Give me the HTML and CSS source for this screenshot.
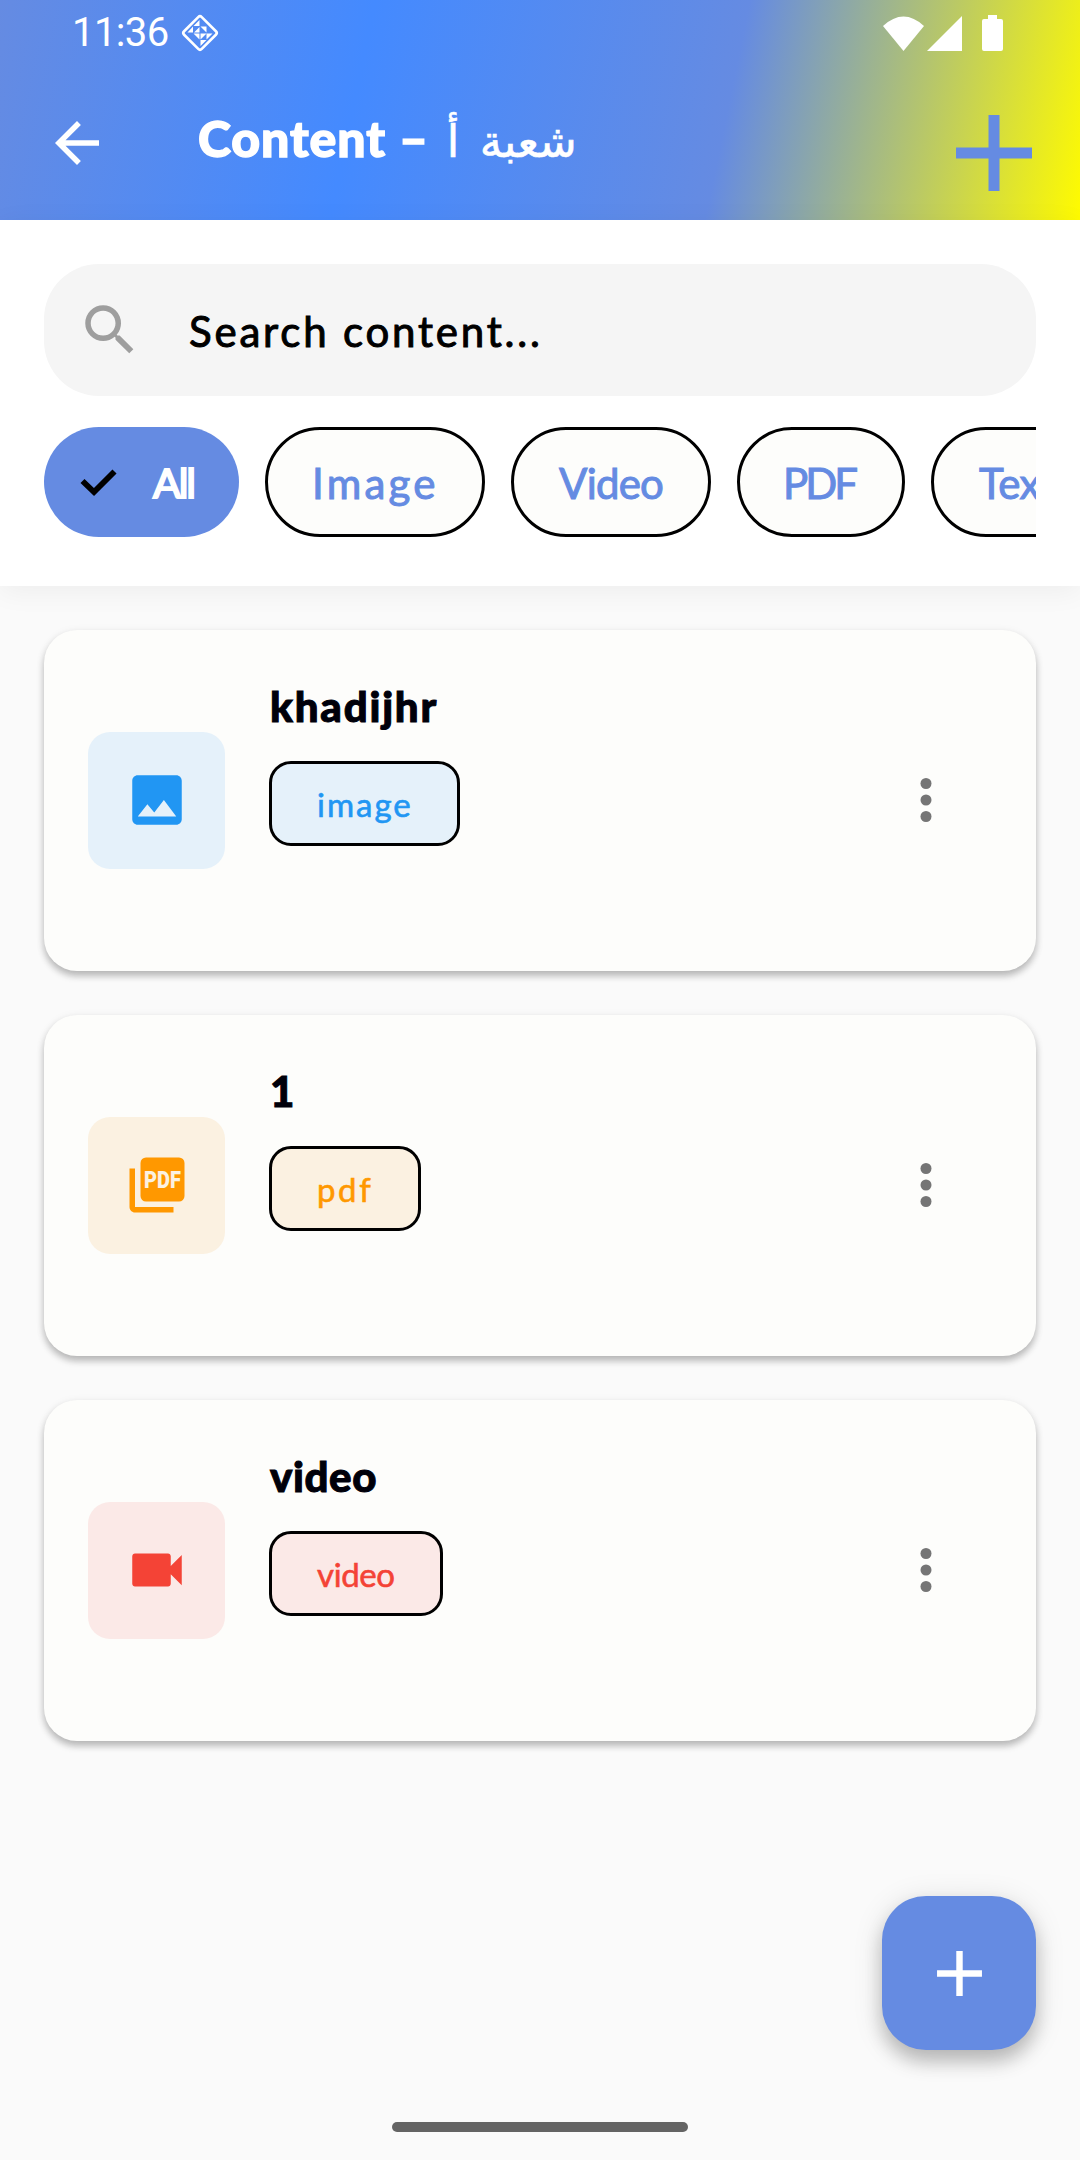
FILE: index.html
```html
<!DOCTYPE html>
<html lang="en">
<head>
<meta charset="utf-8">
<title>Content</title>
<link rel="stylesheet" href="styles.css">
</head>
<body>
<div class="screen">
  <header class="header">
    <div class="status">
      <span class="clock">11:36</span>
      <svg class="notice" viewBox="0 0 40 40">
        <rect x="7.500" y="7.500" width="25" height="25" rx="2.500" transform="rotate(45 20 20)" fill="none" stroke="#fff" stroke-width="2.600"/>
        <path d="M19.500 7v6h-6zM20.500 13.500h6v6zM13 13.500v6H7.500zM19.500 14v5.500h-5.500zM20.500 20.500h12l-6 6v-6l-6 6zM13.500 20.500h6v6zM20.500 27h6l-6 6z" fill="#fff"/>
      </svg>
      <span class="grow"></span>
      <svg class="wifi" viewBox="0 0 41 35"><path d="M0 10Q20.500 -9 41 10L20.500 35z" fill="#fff"/></svg>
      <svg class="signal" viewBox="0 0 35 35"><path d="M35 0v35H0z" fill="#fff"/></svg>
      <svg class="battery" viewBox="0 0 21 36"><path d="M6 0h9v4h4q2 0 2 2v28q0 2-2 2H2q-2 0-2-2V6q0-2 2-2h4z" fill="#fff"/></svg>
    </div>
    <div class="appbar">
      <svg class="icon back" viewBox="0 0 24 24"><path d="M20 11H7.830l5.590-5.590L12 4l-8 8 8 8 1.410-1.410L7.830 13H20z" fill="#fff"/></svg>
      <h1 class="title"><span>Content</span><span class="dash">–</span><span class="arabic" lang="ar">شعبة أ</span></h1>
      <svg class="add" viewBox="0 0 76 76"><path d="M32.500 0h11v32.500H76v11H43.500V76h-11V43.500H0v-11h32.500z" fill="#658be2"/></svg>
    </div>
  </header>

  <section class="filters">
    <div class="search">
      <svg class="icon" viewBox="0 0 24 24"><path d="M15.500 14h-.790l-.280-.270A6.471 6.471 0 0 0 16 9.500 6.500 6.500 0 1 0 9.500 16c1.610 0 3.090-.590 4.230-1.570l.270.280v.790l5 4.990L20.490 19l-4.990-5zm-6 0C7.010 14 5 11.990 5 9.500S7.010 5 9.500 5 14 7.010 14 9.500 11.990 14 9.500 14z" fill="#9e9e9e"/></svg>
      <span class="hint">Search content...</span>
    </div>
    <div class="chips">
      <div class="chip chip-on">
        <svg class="check" viewBox="0 0 49 49"><path d="M8.500 23l11.500 11 20.500-20.500" fill="none" stroke="#000" stroke-width="5.800"/></svg>
        <span>All</span>
      </div>
      <div class="chip chip-image"><span>Image</span></div>
      <div class="chip chip-video"><span>Video</span></div>
      <div class="chip chip-pdf"><span>PDF</span></div>
      <div class="chip chip-text"><span>Text</span></div>
    </div>
  </section>

  <main class="list">
    <article class="card image">
      <div class="tile">
        <svg class="icon" viewBox="0 0 24 24"><path d="M21 19V5c0-1.100-.900-2-2-2H5c-1.100 0-2 .900-2 2v14c0 1.100.900 2 2 2h14c1.100 0 2-.900 2-2zM8.500 13.500l2.500 3.010L14.500 12l4.500 6H5l3.500-4.500z" fill="currentColor"/></svg>
      </div>
      <div class="info">
        <h2 class="name">khadijhr</h2>
        <span class="badge">image</span>
      </div>
      <svg class="icon more" viewBox="0 0 24 24"><circle cx="12" cy="6" r="2"/><circle cx="12" cy="12" r="2"/><circle cx="12" cy="18" r="2"/></svg>
    </article>
    <article class="card pdf">
      <div class="tile">
        <svg class="icon" viewBox="0 0 24 24">
          <rect x="6" y="2" width="16" height="16" rx="2" fill="currentColor"/>
          <path d="M4 6H2v14c0 1.100.900 2 2 2h14v-2H4z" fill="currentColor"/>
          <text class="pdf-mark" x="7.300" y="13" textLength="13.400" lengthAdjust="spacingAndGlyphs">PDF</text>
        </svg>
      </div>
      <div class="info">
        <h2 class="name">1</h2>
        <span class="badge">pdf</span>
      </div>
      <svg class="icon more" viewBox="0 0 24 24"><circle cx="12" cy="6" r="2"/><circle cx="12" cy="12" r="2"/><circle cx="12" cy="18" r="2"/></svg>
    </article>
    <article class="card video">
      <div class="tile">
        <svg class="icon" viewBox="0 0 24 24"><path d="M17 10.500V7c0-.550-.450-1-1-1H4c-.550 0-1 .450-1 1v10c0 .550.450 1 1 1h12c.550 0 1-.450 1-1v-3.500l4 4v-11l-4 4z" fill="currentColor"/></svg>
      </div>
      <div class="info">
        <h2 class="name">video</h2>
        <span class="badge">video</span>
      </div>
      <svg class="icon more" viewBox="0 0 24 24"><circle cx="12" cy="6" r="2"/><circle cx="12" cy="12" r="2"/><circle cx="12" cy="18" r="2"/></svg>
    </article>
  </main>

  <button class="fab" aria-label="Add"><svg viewBox="0 0 24 24"><path d="M19 13h-6v6h-2v-6H5v-2h6V5h2v6h6z" fill="#fff"/></svg></button>
  <div class="home"></div>
</div>
</body>
</html>
```
FILE: styles.css
```css
* { box-sizing: border-box; }

body {
  margin: 0;
  font-family: Lato, "DejaVu Sans", sans-serif;
  color: #000;
}

svg { display: block; flex: none; }

.screen {
  position: relative;
  display: flex;
  flex-direction: column;
  width: 1080px;
  height: 2160px;
  overflow: hidden;
  background: #fafafa;
}

.icon { width: 66px; height: 66px; }
.grow { flex: 1; }

/* Header */
.header {
  flex: none;
  height: 220px;
  background: linear-gradient(101.51deg, #658be2 0%, #448aff 33.33%, #658be2 66.67%, #fffb00 100%);
}

.status {
  display: flex;
  align-items: center;
  height: 66px;
  padding: 0 77px 0 72px;
}

.clock {
  width: 108px;
  font: 400 40px/66px Roboto, sans-serif;
  letter-spacing: -0.6px;
  color: #fff;
}

.notice { width: 40px; height: 40px; }
.wifi { width: 41px; height: 35px; margin-right: 3px; }
.signal { width: 35px; height: 35px; margin-right: 20px; }
.battery { width: 21px; height: 36px; }

.appbar {
  display: flex;
  align-items: center;
  height: 154px;
  padding: 0 48px 0 44px;
}

.title {
  display: flex;
  flex: 1;
  align-items: baseline;
  margin: -8px 0 0 88px;
  font-size: 50px;
  font-weight: 900;
  line-height: 64px;
  letter-spacing: 0.9px;
  white-space: nowrap;
  color: #fff;
  -webkit-text-stroke: 1.4px;
}

.dash { margin-left: 13px; }

.arabic {
  margin-left: 18px;
  font-size: 45px;
  font-weight: 500;
  word-spacing: 9px;
  letter-spacing: 0;
  -webkit-text-stroke: 0.6px;
}

.add { width: 76px; height: 76px; margin-top: 19px; }

/* Search and filter chips */
.filters {
  position: relative;
  flex: none;
  height: 366px;
  padding: 44px 44px 0;
  background: #fff;
  box-shadow: 0 5px 27px rgba(0, 0, 0, 0.055);
}

.search {
  display: flex;
  align-items: center;
  height: 132px;
  padding-left: 33px;
  border-radius: 55px;
  background: #f5f5f5;
}

.hint {
  margin: 2px 0 0 46px;
  font-size: 42px;
  letter-spacing: 2.8px;
  -webkit-text-stroke: 1px;
}

.chips {
  display: flex;
  gap: 26px;
  margin-top: 31px;
  overflow: hidden;
}

.chip {
  display: flex;
  flex: none;
  align-items: center;
  height: 110px;
  padding: 1px 0 0 43px;
  border: 3px solid #000;
  border-radius: 55px;
  background: #fdfdfb;
  font-size: 42px;
  color: #658be2;
  -webkit-text-stroke: 1px;
}

.chip-on {
  width: 195px;
  padding-left: 30px;
  border: 0;
  background: #658be2;
  color: #fff;
  font-size: 41px;
  letter-spacing: -2px;
  -webkit-text-stroke: 2px;
}

.check { width: 49px; height: 49px; margin-right: 30px; }
.chip-image { width: 220px; padding-left: 44px; letter-spacing: 3.2px; }
.chip-video { width: 200px; padding-left: 45px; letter-spacing: -0.8px; }
.chip-pdf { width: 168px; letter-spacing: -3px; }
.chip-text { width: 180px; padding-left: 45px; letter-spacing: -0.5px; }

/* Content cards */
.list {
  display: flex;
  flex-direction: column;
  gap: 44px;
  padding: 44px;
}

.card {
  display: flex;
  align-items: center;
  height: 341px;
  padding: 44px 77px 44px 44px;
  border-radius: 33px;
  background: #fdfdfb;
  box-shadow: 0 5px 7px rgba(0, 0, 0, 0.23), 0 2px 10px rgba(0, 0, 0, 0.08);
}

.tile {
  display: flex;
  flex: none;
  align-items: center;
  justify-content: center;
  width: 137px;
  height: 137px;
  padding-bottom: 1px;
  border-radius: 22px;
}

.info {
  display: flex;
  flex: 1;
  flex-direction: column;
  align-items: flex-start;
  align-self: flex-start;
  margin-left: 44px;
}

.name {
  margin: 1px 0 0 1px;
  font-size: 42px;
  font-weight: 900;
  line-height: 62px;
  color: #00000a;
  -webkit-text-stroke: 1px;
}

.badge {
  height: 85px;
  margin-top: 24px;
  padding: 1px 43px 0 45px;
  border: 3px solid #000;
  border-radius: 22px;
  font-size: 33px;
  line-height: 79px;
  -webkit-text-stroke: 0.6px;
}

.image .tile, .image .badge { color: #2196f3; background: #e5f1fa; }
.pdf .tile, .pdf .badge { color: #ff9800; background: #fbf1e1; }
.video .tile, .video .badge { color: #f44336; background: #fbe9e7; }

.image .name { letter-spacing: 1.8px; }
.video .name { letter-spacing: 0.6px; }
.image .badge { width: 191px; letter-spacing: 2px; }
.pdf .badge { width: 152px; letter-spacing: 2.6px; }
.video .badge { width: 174px; letter-spacing: -0.4px; }

.pdf-mark {
  font: 900 8.4px Roboto, sans-serif;
  fill: #fbf1e1;
}

.more { margin-bottom: 2px; fill: #757575; }

/* Floating button and gesture bar */
.fab {
  position: absolute;
  right: 44px;
  bottom: 110px;
  display: flex;
  align-items: center;
  justify-content: center;
  width: 154px;
  height: 154px;
  padding: 0;
  border: 0;
  border-radius: 44px;
  background: #658be2;
  box-shadow: 0 12px 18px rgba(0, 0, 0, 0.2), 0 5px 30px rgba(0, 0, 0, 0.13);
}

.fab svg { width: 77px; height: 77px; }

.home {
  position: absolute;
  left: 392px;
  bottom: 28px;
  width: 296px;
  height: 10px;
  border-radius: 5px;
  background: #646464;
}
```
